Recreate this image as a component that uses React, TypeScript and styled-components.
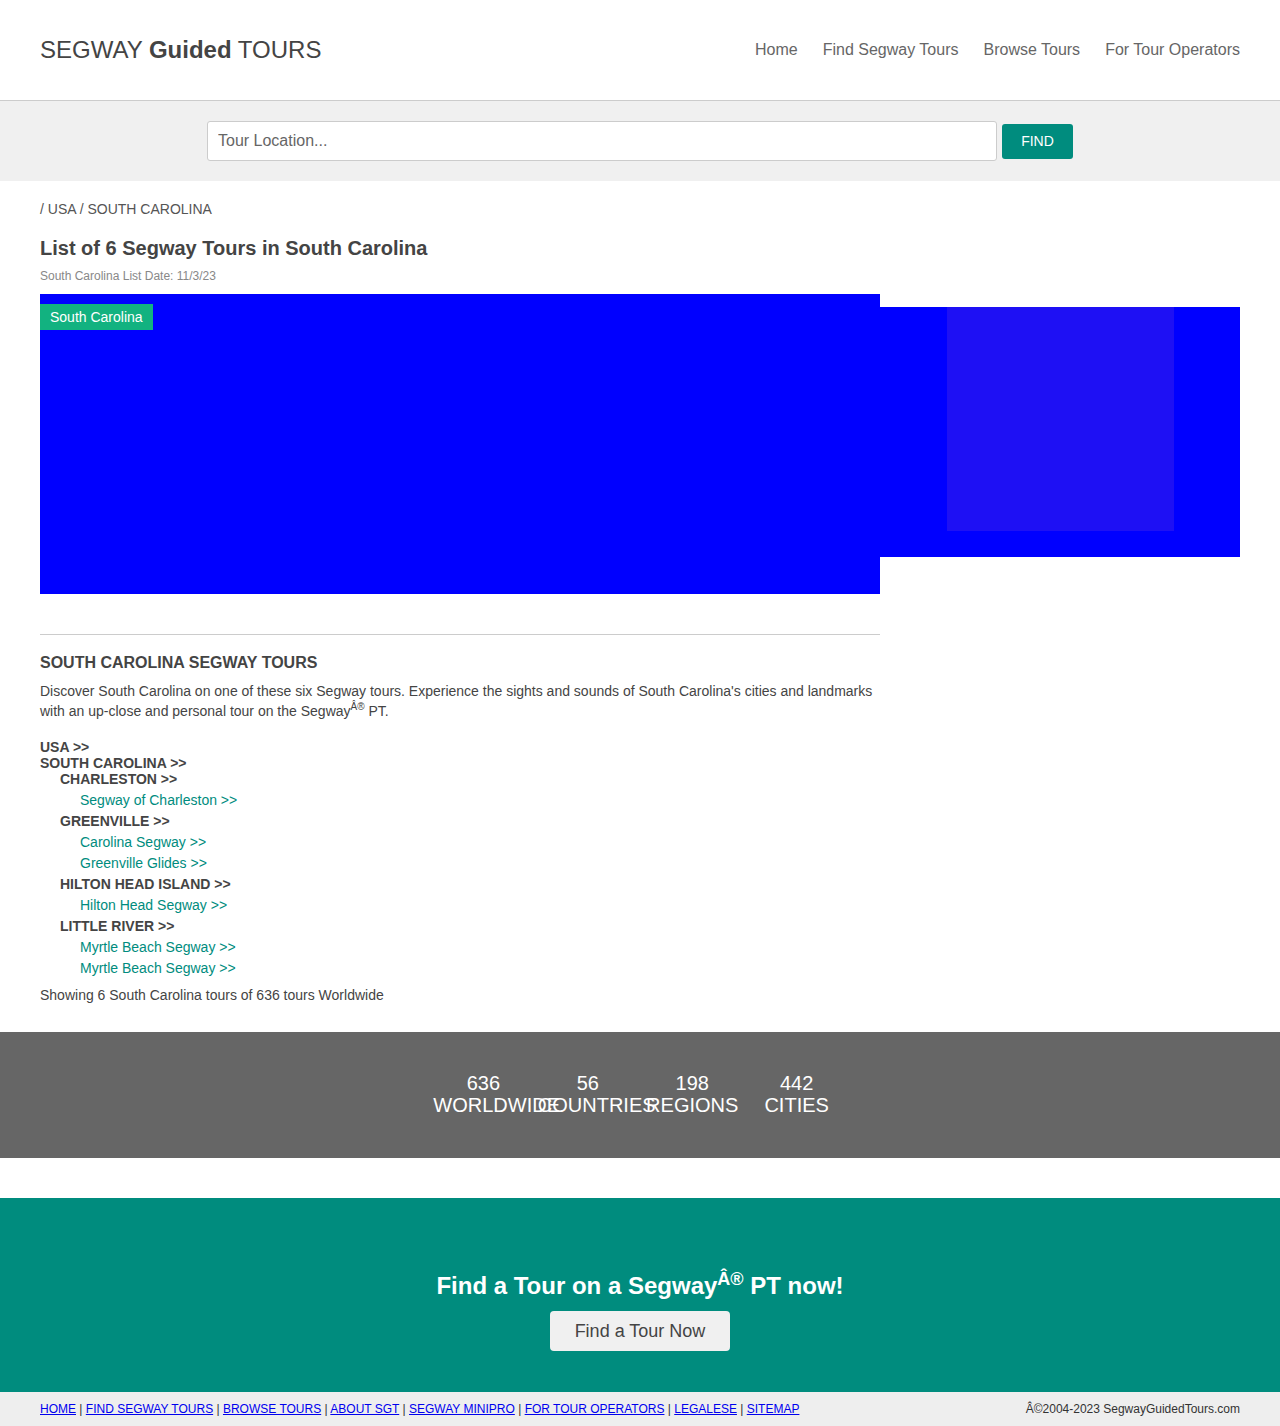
import React from "react";
import styled, { createGlobalStyle } from "styled-components";

const GlobalStyle = createGlobalStyle`
  html, body { margin: 0; padding: 0; background: #fff; }
  body { font-family: "Liberation Sans", Arial, Helvetica, sans-serif; color: #444; }
  * { box-sizing: border-box; }
`;

const TEAL = "#008c7e";

const Header = styled.header`
  height: 101px;
  padding: 0 40px;
  display: flex;
  align-items: center;
  justify-content: space-between;
  border-bottom: 1px solid #ccc;
`;

const Logo = styled.div`
  font-size: 24px;
  color: #444;
  line-height: 28px;
  b { font-weight: 700; }
`;

const Nav = styled.nav`
  display: flex;
  gap: 25px;
`;

const NavLink = styled.a`
  font-size: 16px;
  color: #666;
  text-decoration: none;
  line-height: 20px;
`;

const SearchBand = styled.div`
  background: #f0f0f0;
  padding: 20px 0;
  display: flex;
  justify-content: center;
  align-items: center;
  gap: 5px;
`;

const SearchInput = styled.input`
  width: 790px;
  height: 40px;
  border: 1px solid #ccc;
  border-radius: 3px;
  padding: 0 10px;
  font-size: 16px;
  font-family: inherit;
  color: #333;
  background: #fff;
  &::placeholder { color: #666; }
`;

const FindButton = styled.button`
  width: 71px;
  height: 35px;
  border: none;
  border-radius: 3px;
  background: ${TEAL};
  color: #fff;
  font-size: 14px;
  font-family: inherit;
`;

const Main = styled.main`
  padding: 20px 40px 27.5px;
`;

const Breadcrumb = styled.div`
  font-size: 14px;
  line-height: 16px;
  color: #555;
  text-transform: uppercase;
`;

const Title = styled.h1`
  margin: 19px 0 0;
  font-size: 20px;
  line-height: 24px;
  font-weight: 700;
  color: #444;
`;

const DateLine = styled.div`
  margin-top: 9px;
  font-size: 12px;
  line-height: 14px;
  color: #888;
`;

const MapRow = styled.div`
  margin-top: 11px;
  display: flex;
  align-items: flex-start;
`;

const MapBox = styled.div`
  position: relative;
  width: 840px;
  height: 300px;
  background: #0000ff;
  flex-shrink: 0;
`;

const MapLabel = styled.span`
  position: absolute;
  left: 0;
  top: 10px;
  height: 26px;
  padding: 0 10px;
  display: flex;
  align-items: center;
  background: #12b280;
  color: #fff;
  font-size: 14px;
`;

const AdBox = styled.aside`
  margin-top: 13px;
  width: 360px;
  height: 250px;
  background: #0000ff;
  padding-left: 67px;
`;

const AdInner = styled.div`
  width: 227px;
  height: 224px;
  background: #1e10f4;
`;

const Divider = styled.hr`
  width: 840px;
  margin: 40px 0 0;
  border: none;
  border-top: 1px solid #ccc;
`;

const SectionTitle = styled.h2`
  margin: 19px 0 0;
  font-size: 16px;
  line-height: 18px;
  font-weight: 700;
  color: #444;
`;

const Intro = styled.p`
  margin: 9px 0 0;
  width: 840px;
  font-size: 14px;
  line-height: 20px;
  color: #444;
  sup { font-size: 10px; line-height: 0; }
`;

const TourList = styled.div`
  margin-top: 18px;
`;

const RegionItem = styled.div`
  font-size: 14px;
  font-weight: 700;
  line-height: 16px;
  color: #444;
`;

const CityItem = styled.div`
  padding-left: 20px;
  font-size: 14px;
  font-weight: 700;
  line-height: 21px;
  color: #444;
  ${RegionItem} + & { margin-top: -2.5px; }
`;

const TourLink = styled.a`
  display: block;
  padding-left: 40px;
  font-size: 14px;
  line-height: 21px;
  color: ${TEAL};
  text-decoration: none;
`;

const Showing = styled.p`
  margin: 6px 0 0;
  font-size: 14px;
  line-height: 20px;
  color: #444;
`;

const StatsBand = styled.section`
  background: #666;
  padding: 40px 0 42px;
  display: flex;
  justify-content: center;
  gap: 4.45px;
`;

const Stat = styled.div`
  width: 100px;
  text-align: center;
  white-space: nowrap;
  color: #fff;
  font-size: 20px;
  line-height: 22px;
`;

const Spacer = styled.div`
  height: 40px;
`;

const Cta = styled.section`
  background: ${TEAL};
  padding: 74px 0 41px;
  display: flex;
  flex-direction: column;
  align-items: center;
`;

const CtaTitle = styled.h2`
  margin: 0;
  color: #fff;
  font-size: 24px;
  line-height: 28px;
  font-weight: 700;
  sup { font-size: 18px; line-height: 0; }
`;

const CtaButton = styled.button`
  margin-top: 11px;
  width: 180px;
  height: 40px;
  border: none;
  border-radius: 4px;
  background: #f0f0f0;
  color: #444;
  font-size: 18px;
  font-family: inherit;
`;

const Footer = styled.footer`
  background: #eee;
  height: 34px;
  padding: 0 40px 1px;
  display: flex;
  align-items: center;
  justify-content: space-between;
  font-size: 12px;
  color: #333;
`;

const FooterLinks = styled.div`
  a { color: #00e; text-decoration: underline; }
`;

const tours: { city: string; links: string[] }[] = [
  { city: "CHARLESTON", links: ["Segway of Charleston"] },
  { city: "GREENVILLE", links: ["Carolina Segway", "Greenville Glides"] },
  { city: "HILTON HEAD ISLAND", links: ["Hilton Head Segway"] },
  { city: "LITTLE RIVER", links: ["Myrtle Beach Segway", "Myrtle Beach Segway"] },
];

const stats = [
  ["636", "WORLDWIDE"],
  ["56", "COUNTRIES"],
  ["198", "REGIONS"],
  ["442", "CITIES"],
];

const footerLinks = [
  "HOME",
  "FIND SEGWAY TOURS",
  "BROWSE TOURS",
  "ABOUT SGT",
  "SEGWAY MINIPRO",
  "FOR TOUR OPERATORS",
  "LEGALESE",
  "SITEMAP",
];

export default function App() {
  return (
    <>
      <GlobalStyle />
      <Header>
        <Logo>
          SEGWAY <b>Guided</b> TOURS
        </Logo>
        <Nav>
          <NavLink href="#">Home</NavLink>
          <NavLink href="#">Find Segway Tours</NavLink>
          <NavLink href="#">Browse Tours</NavLink>
          <NavLink href="#">For Tour Operators</NavLink>
        </Nav>
      </Header>
      <SearchBand>
        <SearchInput placeholder="Tour Location..." />
        <FindButton>FIND</FindButton>
      </SearchBand>
      <Main>
        <Breadcrumb>/ USA / South Carolina</Breadcrumb>
        <Title>List of 6 Segway Tours in South Carolina</Title>
        <DateLine>South Carolina List Date: 11/3/23</DateLine>
        <MapRow>
          <MapBox>
            <MapLabel>South Carolina</MapLabel>
          </MapBox>
          <AdBox>
            <AdInner />
          </AdBox>
        </MapRow>
        <Divider />
        <SectionTitle>SOUTH CAROLINA SEGWAY TOURS</SectionTitle>
        <Intro>
          Discover South Carolina on one of these six Segway tours. Experience the sights and
          sounds of South Carolina's cities and landmarks with an up-close and personal tour on
          the Segway<sup>Â®</sup> PT.
        </Intro>
        <TourList>
          <RegionItem>USA &gt;&gt;</RegionItem>
          <RegionItem>SOUTH CAROLINA &gt;&gt;</RegionItem>
          {tours.map((t) => (
            <React.Fragment key={t.city}>
              <CityItem>{t.city} &gt;&gt;</CityItem>
              {t.links.map((l, i) => (
                <TourLink href="#" key={i}>
                  {l} &gt;&gt;
                </TourLink>
              ))}
            </React.Fragment>
          ))}
        </TourList>
        <Showing>Showing 6 South Carolina tours of 636 tours Worldwide</Showing>
      </Main>
      <StatsBand>
        {stats.map(([n, l]) => (
          <Stat key={l}>
            {n}
            <br />
            {l}
          </Stat>
        ))}
      </StatsBand>
      <Spacer />
      <Cta>
        <CtaTitle>
          Find a Tour on a Segway<sup>Â®</sup> PT now!
        </CtaTitle>
        <CtaButton>Find a Tour Now</CtaButton>
      </Cta>
      <Footer>
        <FooterLinks>
          {footerLinks.map((l, i) => (
            <React.Fragment key={l}>
              {i > 0 && " | "}
              <a href="#">{l}</a>
            </React.Fragment>
          ))}
        </FooterLinks>
        <div>Â©2004-2023 SegwayGuidedTours.com</div>
      </Footer>
    </>
  );
}
